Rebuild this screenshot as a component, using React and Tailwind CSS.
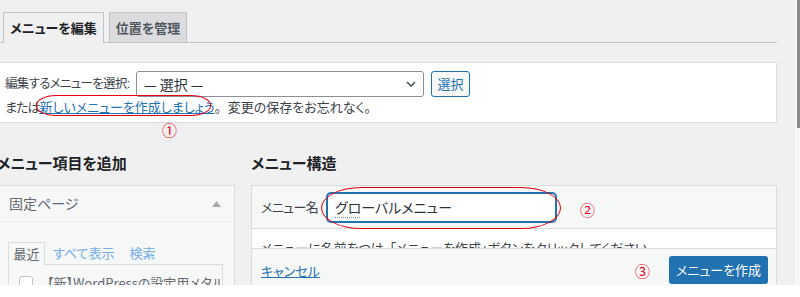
export default function App() {
  return (
    <div className="relative flex h-[297px] w-[800px] flex-col overflow-hidden bg-white font-['Noto_Sans_CJK_JP',sans-serif] text-[13px] text-[#3c434a] [font-feature-settings:'palt']">
      <div className="flex h-[285px] overflow-hidden bg-[#f0f0f1]">
        <div className="w-[777px] shrink-0">
          {/* tabs */}
          <div className="flex h-[43px] items-end gap-[5px] border-b border-[#c3c4c7] pl-[3px]">
            <div className="-mb-px flex h-[31px] w-[101px] items-center justify-center border border-b-0 border-[#c3c4c7] bg-[#f0f0f1] text-[13px] font-bold text-[#1d2327]">
              メニューを編集
            </div>
            <div className="flex h-[30px] w-[78px] items-center justify-center border border-b-0 border-[#c3c4c7] bg-[#dcdcde] text-[13px] font-bold text-[#50575e]">
              位置を管理
            </div>
          </div>

          {/* select box */}
          <div className="mt-[19px] h-[61px] border border-l-0 border-[#dcdcde] bg-white pl-[5px] pt-[8px]">
            <div className="flex items-center">
              <span className="w-[131px] shrink-0 whitespace-nowrap text-[12.5px] tracking-[-0.7px]">編集するメニューを選択<span className="font-['Liberation_Sans',sans-serif]">:</span></span>
              <div className="flex h-[26px] w-[288px] items-center justify-between rounded-[3px] border border-[#8c8f94] bg-white pl-[7px] pr-[6px] text-[14px] text-[#2c3338]">
                <span>— 選択 —</span>
                <svg width="12" height="12" viewBox="0 0 12 12" fill="none" stroke="#50575e" strokeWidth="1.6">
                  <path d="M2 4l4 4 4-4" />
                </svg>
              </div>
              <div className="ml-[7px] flex h-[26px] w-[39px] items-center justify-center rounded-[3px] border border-[#2271b1] bg-[#f6f7f7] text-[13px] text-[#2271b1]">
                選択
              </div>
            </div>
            <div className="mt-[1px] whitespace-nowrap leading-[18px]">
              <span className="tracking-[-1px]">または</span><a className="text-[#2271b1] underline">新しいメニューを作成しましょう</a>
              <span className="[font-feature-settings:normal]">。</span>変更の保存をお忘れなく<span className="[font-feature-settings:normal]">。</span>
            </div>
          </div>

          {/* columns */}
          <div className="mt-[30px] flex gap-[16px]">
            <div className="w-[235px] shrink-0">
              <h2 className="-ml-[3px] mb-[12px] whitespace-nowrap text-[15px] font-bold leading-[20px] text-[#1d2327]">メニュー項目を追加</h2>
              <div className="h-[110px] border border-l-0 border-[#dcdcde] bg-[#f6f7f7]">
                <div className="flex h-[36px] items-center justify-between border-b border-[#f0f0f1] pl-[9px] pr-[13px] text-[14px] text-[#646970]">
                  <span>固定ページ</span>
                  <svg width="9" height="6" viewBox="0 0 9 6">
                    <path d="M0 6L4.5 0 9 6z" fill="#a7aaad" />
                  </svg>
                </div>
                <div className="pl-[8px] pr-[11px] pt-[20px]">
                  <div className="flex h-[22px] items-end">
                    <div className="-mb-px flex h-[23px] w-[37px] items-center justify-center border border-b-0 border-[#dcdcde] bg-[#f6f7f7] text-[#646970]">最近</div>
                    <span className="ml-[8px] pb-[2px] text-[#72aee6]">すべて表示</span>
                    <span className="ml-[15px] pb-[2px] text-[#72aee6]">検索</span>
                  </div>
                  <div className="flex h-[40px] items-start gap-[14px] overflow-hidden whitespace-nowrap border border-[#dcdcde] bg-[#f6f7f7] pl-[10px] pt-[11px] text-[#646970]">
                    <span className="h-[14px] w-[14px] shrink-0 rounded-[3px] border border-[#c3c4c7] bg-white" />
                    <span className="leading-[14px]">【新】WordPressの設定用メタル</span>
                  </div>
                </div>
              </div>
            </div>

            <div className="flex-1">
              <h2 className="mb-[12px] text-[15px] font-bold leading-[20px] text-[#1d2327]">メニュー構造</h2>
              <div className="border border-[#dcdcde] bg-white">
                <div className="flex h-[43px] items-center border-b border-[#dcdcde] bg-[#f6f7f7] pl-[9px]">
                  <span className="w-[66px] shrink-0 whitespace-nowrap tracking-[-0.6px]">メニュー名</span>
                  <div className="flex h-[29px] w-[229px] items-center rounded-[4px] border border-[#2271b1] bg-white pl-[7px] text-[14px] text-[#2c3338] shadow-[0_0_0_1px_#2271b1]">
                    <span className="underline decoration-dotted decoration-[#8c8f94] underline-offset-[4px]">グロ</span>ーバルメニュー
                  </div>
                </div>
                <div className="h-[19px] overflow-hidden whitespace-nowrap pl-[9px] pt-[12px] leading-[14px] text-[#3c434a]">
                  メニューに名前をつけ、「メニューを作成」ボタンをクリックしてください。
                </div>
                <div className="flex h-[40px] items-start justify-between border-t border-[#dcdcde] bg-[#f6f7f7] pl-[9px] pr-[8px] pt-[7px]">
                  <a className="mt-[5px] text-[#2271b1] underline">キャンセル</a>
                  <div className="flex h-[28px] w-[99px] items-center justify-center rounded-[3px] bg-[#2271b1] text-[13px] text-white">
                    メニューを作成
                  </div>
                </div>
              </div>
            </div>
          </div>
        </div>
        <div className="w-[18px] shrink-0" />
        <div className="relative w-[5px] shrink-0 bg-[#f7f7f7]">
          <div className="absolute right-0 top-0 h-[128px] w-[3px] bg-[#8a8a8a]" />
        </div>
      </div>
      <div className="h-[12px] bg-white" />

      {/* annotations */}
      <div className="absolute left-[36px] top-[95px] h-[21px] w-[175px] rounded-[20px/10px] border-[1.5px] border-[#e60012]" />
      <span className="absolute left-[162px] top-[120px] text-[15px] leading-[20px] text-[#e60012]">①</span>
      <div className="absolute left-[321px] top-[187px] h-[42px] w-[240px] rounded-[40px/21px] border-[1.5px] border-[#e60012]" />
      <span className="absolute left-[580px] top-[200px] text-[15px] leading-[20px] text-[#e60012]">②</span>
      <span className="absolute left-[635px] top-[261px] text-[15px] leading-[20px] text-[#e60012]">③</span>
    </div>
  );
}
